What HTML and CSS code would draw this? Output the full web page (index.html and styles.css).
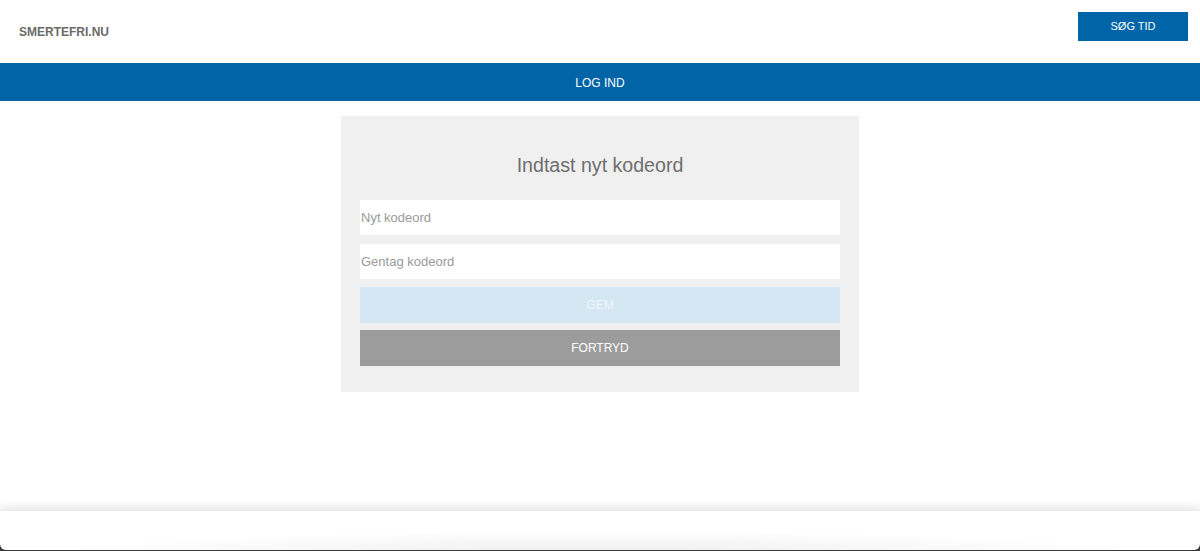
FILE: index.html
```html
<!DOCTYPE html>
<html lang="da">
<head>
<meta charset="utf-8">
<title>Smertefri.nu - Log ind</title>
<link rel="stylesheet" href="styles.css">
</head>
<body>
<header class="topbar">
  <div class="logo">SMERTEFRI.NU</div>
  <a class="book-btn" href="#">SØG TID</a>
</header>
<nav class="titlebar">LOG IND</nav>
<main class="content">
  <section class="card">
    <h1 class="card-title">Indtast nyt kodeord</h1>
    <form class="form">
      <input class="field" type="password" placeholder="Nyt kodeord">
      <input class="field" type="password" placeholder="Gentag kodeord">
      <button class="btn btn-save" type="button">GEM</button>
      <button class="btn btn-cancel" type="button">FORTRYD</button>
    </form>
  </section>
</main>
<div class="dock"><div class="dock-inner"></div></div>
</body>
</html>
```
FILE: styles.css
```css
html, body {
  margin: 0;
  padding: 0;
  background: #fff;
  font-family: "Liberation Sans", Arial, sans-serif;
}
.topbar {
  height: 63px;
  display: flex;
  align-items: center;
  justify-content: space-between;
  padding: 0 12px 0 19px;
  box-sizing: border-box;
}
.logo {
  font-size: 12px;
  font-weight: bold;
  color: #6a6a6a;
}
.book-btn {
  display: flex;
  align-items: center;
  justify-content: center;
  width: 110px;
  height: 29px;
  margin-top: -11px;
  background: #0065a8;
  color: #fff;
  font-size: 11px;
  text-decoration: none;
}
.titlebar {
  height: 38px;
  box-sizing: border-box;
  padding-top: 2px;
  background: #0064a6;
  color: #fff;
  font-size: 12px;
  display: flex;
  align-items: center;
  justify-content: center;
}
.content {
  display: flex;
  justify-content: center;
  padding-top: 15px;
}
.card {
  width: 518px;
  box-sizing: border-box;
  background: #f0f0f0;
  padding: 0 19px 26px;
}
.card-title {
  margin: 37px 0 23px;
  font-size: 19.6px;
  line-height: 24px;
  font-weight: normal;
  color: #6e6e6e;
  text-align: center;
}
.form {
  display: flex;
  flex-direction: column;
}
.field {
  height: 35px;
  border: 0;
  padding: 0 0 0 1px;
  margin: 0 0 9px;
  background: #fff;
  font-family: inherit;
  font-size: 13px;
  color: #333;
  outline: none;
}
.field:nth-of-type(2) { margin-bottom: 8px; }
.field::placeholder { color: #9a9a9a; }
.btn {
  height: 36px;
  border: 0;
  font-family: inherit;
  font-size: 12px;
  color: #fff;
  padding: 0;
}
.btn-save {
  background: #d5e7f3;
  color: #eef6fb;
  margin-bottom: 7px;
}
.btn-cancel {
  background: #9c9c9c;
}
.dock {
  position: fixed;
  left: 0;
  right: 0;
  bottom: 0;
  height: 40px;
  background: #3a3a3a;
  box-shadow: 0 -3px 10px rgba(0, 0, 0, 0.12);
}
.dock-inner {
  height: 39px;
  background: radial-gradient(ellipse 46% 60% at 50% 110%, rgba(0,0,0,0.07), rgba(0,0,0,0) 100%), #fff;
  border-radius: 0 0 6px 6px;
}
```
